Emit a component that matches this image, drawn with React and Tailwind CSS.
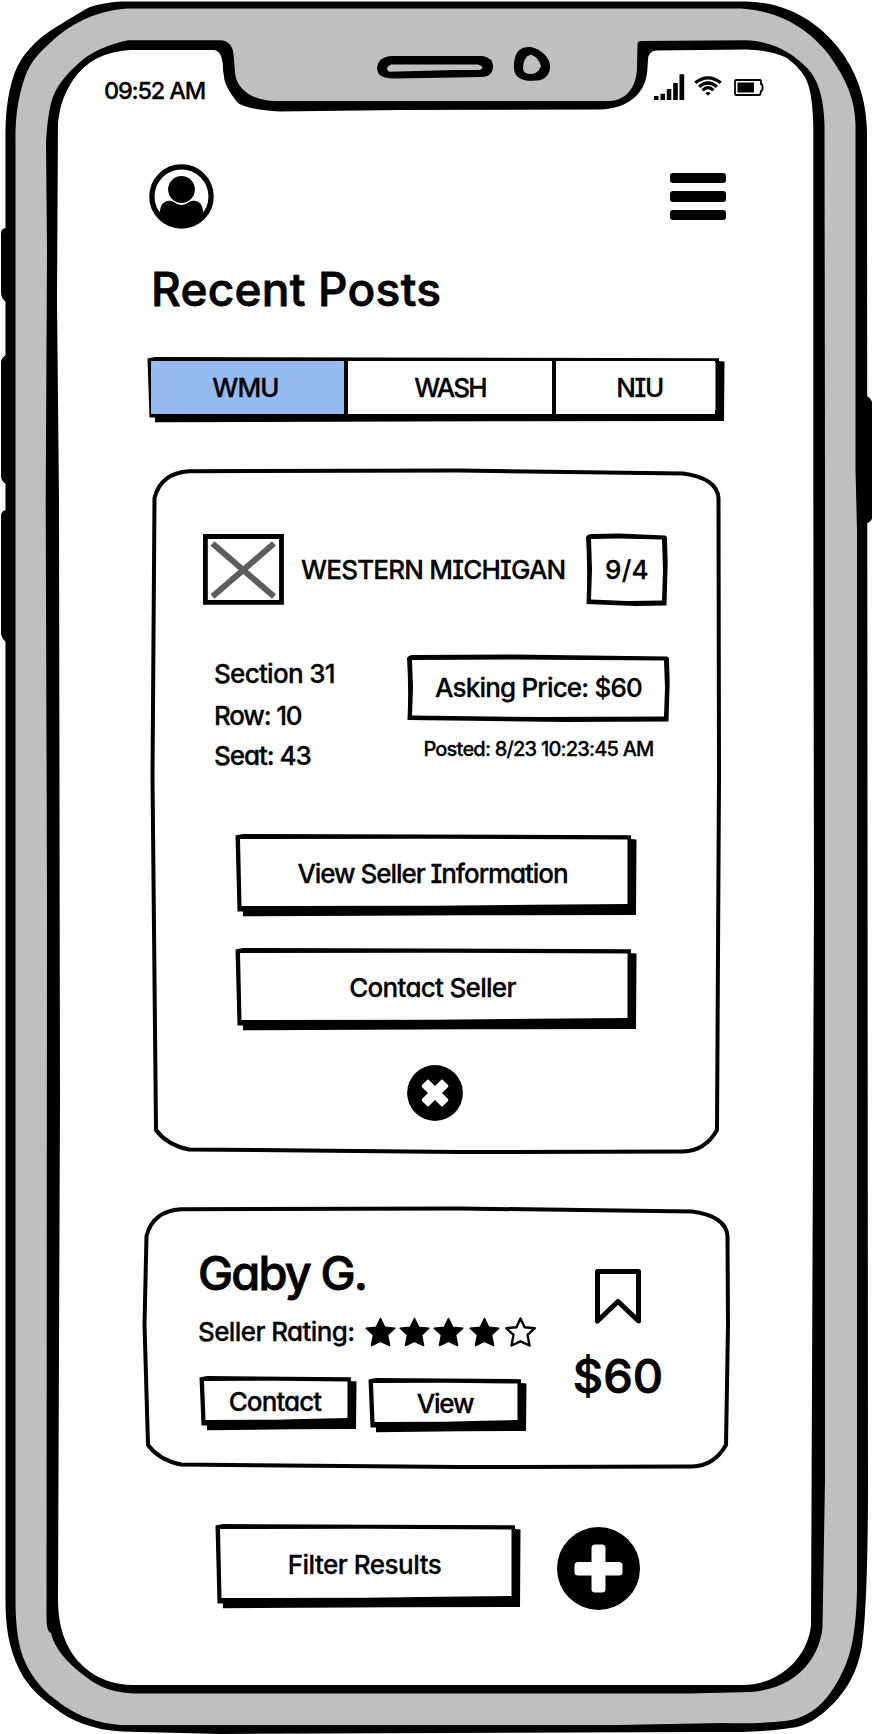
import React from "react";

function PhoneFrame() {
  return (
    <svg className="absolute inset-0" width="872" height="1734" viewBox="0 0 872 1734" aria-hidden="true">
      {/* side buttons */}
      <path d="M1 234Q1 228 6 228V302Q1 298 1 293ZM1 362Q2 357 6 355V484Q2 482 1 477ZM1 516Q1 511 6 510V642Q1 638 1 633Z" />
      <path d="M855 396H867Q871 398 873 404V515Q872 522 867 523H855Z" />
      {/* outer shell */}
      <path d="M122 1.500H745C795 2 828 31 845 57C860 80 867 105 867 135L868 1480C868 1560 866 1620 862 1646C857 1674 846 1690 834 1703C820 1717 806 1727 790 1728C760 1733 720 1732 695 1732L220 1734L122 1731.500C92 1730 70 1720 56 1709C38 1696 28 1686 20 1671C8 1647 5.500 1625 5.500 1600V140C5 110 9 88 15 72C21 56 36 40 50 31C66 21 80 12 90 7Q106 2 122 1.500Z" />
      <path
        fill="#bfbfbf"
        d="M127 8.500H740C785 11 813 34 829 55C847 80 855 100 855.500 125V470L857 530V1590C856 1640 849 1660 840 1677C828 1700 812 1718 785 1721Q760 1724 723 1723L617 1725H122C90 1723 70 1711 56 1700C38 1687 28 1670 23 1657Q15.500 1637 15.500 1600V143C15 118 18 97 25 77C31 61 39 53 50 43Q64 29 83 20Q104 10 127 8.500Z"
      />
      {/* screen outline with the notch */}
      <path d="M128 40.300H220Q232 41 233.500 54L235 72C236 90 254 101 275 101H609C624 101 637 89 637 67L637.500 44Q638 41 641 41L745 40.300C775 41 794 55 806 67C820 80 824 103 824.500 125L825 480V1480L822.500 1627C820 1655 800 1688 751 1692L690 1693.500H133C105 1692 93 1682 86 1677Q56 1655 51 1633Q46.500 1632 46.500 1618L47 900L45.700 500L47 250L46 143Q47 120 51 103C55 88 65 75 80 62Q97 47 128 40.300Z" />
      <path
        fill="#fff"
        d="M130 50H214Q223 51 223 70L224.500 80Q226 88 237 102Q243 109 280 111.500L400 110L599 109.500C630 109 646 92 647.300 70L648 60Q648 50.500 657 50.500L746 49.500Q770 50 787 58Q804 71 808 84Q813 99 813.300 130V480L814 900L811 1625C808 1657 780 1685 742 1685H133C98 1684 84 1667 77 1660Q58 1637 58 1600L60 1100L59 500L57 300L58 123C60 103 65 93 73 80Q92 52 130 50Z"
      />
      {/* speaker and camera */}
      <path d="M391 56H483Q493 58 493 66Q493 77 481 77L455 77.500L395 78.500Q377 79 377 68Q378 57 391 56Z" />
      <path fill="#bfbfbf" d="M391 64.500H478Q486 67 480 70L455 70L389 71.700Q384 68 391 64.500Z" />
      <path d="M529 47C538 47 551 57 550 67C550 74 545 81 536 80.500C526 82 514 79 514 68C514 58 516 47 529 47Z" />
      <path fill="#bfbfbf" d="M531 54.500Q539 58 541 66Q538 74 531 74Q523 74 523 68Q523 57 531 54.500Z" />
    </svg>
  );
}

/* Solid-shadow box with slightly uneven edges; sized by its parent. */
function ShadowSketch({ w, h, s = 5 }) {
  return (
    <svg className="absolute inset-0 overflow-visible" width={w} height={h} viewBox={`0 0 ${w} ${h}`} aria-hidden="true">
      <path d={`M-0.500 1.500L7 0L${w} 1.200V${s}L${w + 5.5} ${s + 0.5}L${w + 5} ${h + 4}L${w * 0.6} ${h + 4.3}L7 ${h + 5.2}V${h + 0.5}H1.500Z`} />
      <path fill="#fff" d={`M4 5L${w * 0.5} 4.800L${w - 3.5} 5.500V${h - 7}L${w * 0.75} ${h - 6.3}L${w * 0.5} ${h - 5.3}L5.500 ${h - 5}Z`} />
    </svg>
  );
}

function SketchButton({ w, h, className, children }) {
  return (
    <button className={`relative flex items-center justify-center ${className}`}>
      <ShadowSketch w={w} h={h} />
      {children}
    </button>
  );
}

/* Hand-drawn frame without a shadow. */
function SketchFrame({ w, h }) {
  return (
    <svg className="absolute inset-0 overflow-visible" width={w} height={h} viewBox={`0 0 ${w} ${h}`} aria-hidden="true">
      <path d={`M-1 3Q0.500 0 5 0L${w * 0.4} -0.500L${w - 2} 1.500Q${w + 0.5} 2 ${w} 6L${w + 0.7} ${h * 0.4}L${w - 0.5} ${h + 0.5}L${w * 0.6} ${h + 1}L-0.500 ${h - 1}Q1 ${h * 0.5} -1 3Z`} />
      <path fill="#fff" d={`M4 5L${w * 0.4} 4.500L${w - 5} 5.500L${w - 4} ${h * 0.5}L${w - 5} ${h - 4.5}L${w * 0.5} ${h - 4}L4 ${h - 5.5}L5 ${h * 0.5}Z`} />
    </svg>
  );
}

function CardOutline({ w, h }) {
  return (
    <svg className="absolute inset-0 overflow-visible" width={w} height={h} viewBox={`0 0 ${w} ${h}`} aria-hidden="true">
      <path
        fill="#fff"
        stroke="#000"
        strokeWidth="4"
        strokeLinejoin="round"
        d={`M37 1.300L${w * 0.54} 0.500L${w - 37} 3.500Q${w - 3} 8 ${w - 1.5} 28L${w - 1} ${h * 0.45}L${w - 3} ${h - 22}Q${w - 15} ${h - 1} ${w - 37} ${h - 0.5}L${w * 0.54} ${h}L37 ${h - 2.5}Q15 ${h - 7} 4 ${h - 22}L0.500 ${h * 0.45}L2.500 28Q9 3 37 1.300Z`}
      />
    </svg>
  );
}

function Signal() {
  return (
    <svg width="31" height="26" viewBox="0 0 31 26" aria-hidden="true">
      <path d="M0 22H4.500V26H0ZM6.500 19.800H11V26H6.500ZM12.800 15H17.300V26H12.800ZM19.200 9H23.800V26H19.200ZM25.500 0.300H30.200V26H25.500Z" />
    </svg>
  );
}

function Wifi() {
  return (
    <svg width="28" height="20" viewBox="0 0 28 20" fill="none" stroke="#000" strokeWidth="3.200" aria-hidden="true">
      <path d="M1.200 6.800Q14 -3.200 26.800 6.800M5 10.800Q14 3.200 23 10.800M8.500 14.300Q14 9 19.500 14.300" />
      <path d="M11.300 17.100Q14 14.800 16.700 17.100L14 19.800Z" fill="#000" stroke="none" />
    </svg>
  );
}

function Battery() {
  return (
    <svg width="30" height="17" viewBox="0 0 30 17" aria-hidden="true">
      <path d="M2.300 1H26Q27 1 27 2.500V5Q28.800 5.300 28.500 8.500Q28.800 11.500 27 12L26.300 15.300Q26 16 25 16H2.300Q1 16 1 14.700V2.300Q1 1 2.300 1Z" fill="none" stroke="#000" strokeWidth="1.800" />
      <path d="M3.500 3.500H20V13.500H3.500Z" />
    </svg>
  );
}

function Avatar() {
  return (
    <svg width="65" height="65" viewBox="0 0 65 65" aria-hidden="true">
      <circle cx="32.500" cy="32.500" r="29.600" fill="#fff" stroke="#000" strokeWidth="5.300" />
      <circle cx="32.500" cy="25.500" r="13.400" />
      <path d="M10.500 48.500Q12 36 21 36.800Q24 36.800 25 38.300Q32.500 43.500 40 38.300Q41 36.800 44 36.800Q53 36 54.500 48.500Q46 61 32.500 61T10.500 48.500Z" />
    </svg>
  );
}

function Star({ filled, className = "" }) {
  return (
    <svg width="31" height="30" viewBox="0 0 31 30" className={className} aria-hidden="true">
      <path
        d="M15.500 1.500L19.600 10.200L29.800 11.200L22.500 17.900L24.500 28.500L15.500 24.300L6.500 28.500L8.500 17.900L1.200 11.200L11.400 10.200Z"
        fill={filled ? "#000" : "#fff"}
        stroke="#000"
        strokeWidth={filled ? 1.6 : 2.4}
        strokeLinejoin="round"
      />
    </svg>
  );
}

function StatusBar() {
  return (
    <div className="flex h-[26px] items-end pl-[104px] pr-[108px]">
      <span className="flex h-[19px] flex-1 items-center text-[23.5px] tracking-[-1.2px]">09:52 AM</span>
      <Signal />
      <div className="ml-[9px] flex h-[26px] items-start pt-[2px]">
        <Wifi />
      </div>
      <div className="ml-[12px] flex h-[26px] items-start pt-[5px]">
        <Battery />
      </div>
    </div>
  );
}

function Tabs() {
  return (
    <div className="relative ml-[148px] mt-[48px] flex h-[60px] w-[571px]">
      <ShadowSketch w={571} h={60} s={4} />
      <div className="relative ml-[3px] mt-[4px] flex h-[53px] w-[564px]">
        <button className="flex w-[197px] items-center justify-center border-r-4 border-black bg-[#95baf1] pt-px pr-1 tracking-[-0.9px]">WMU</button>
        <button className="flex w-[208px] items-center justify-center border-r-4 border-black bg-white pt-px tracking-[-1.8px]">WASH</button>
        <button className="flex flex-1 items-center justify-center bg-white pl-[8px] pt-px tracking-[-1.4px]">NIU</button>
      </div>
    </div>
  );
}

function ListingCard() {
  return (
    <section className="relative ml-[152px] mt-[53px] h-[682px] w-[568px]">
      <CardOutline w={568} h={682} />
      <div className="relative flex flex-col">
        <div className="mt-[64px] flex h-[71px] items-center pl-[51px]">
          <svg width="81" height="71" viewBox="0 0 81 71" aria-hidden="true">
            <path d="M2.400 2.500H78.500V68.300H2.400Z" fill="#fff" stroke="#000" strokeWidth="4.800" />
            <path d="M9.500 9.500L71 62.500M71 9.500L9.500 62.500" stroke="#5d5d5f" strokeWidth="6" />
          </svg>
          <h2 className="ml-[17px] w-[286px] whitespace-nowrap tracking-[-0.8px]">WESTERN MICHIGAN</h2>
          <div className="relative flex h-[71px] w-[80px] items-center justify-center tracking-[0.3px]">
            <SketchFrame w={80} h={71} />
            <span className="relative pt-px">9/4</span>
          </div>
        </div>
        <div className="mt-[48px] flex h-[123px] pl-[62px]">
          <div className="flex w-[194px] flex-col leading-[41px]">
            <span className="tracking-[-0.7px]">Section 31</span>
            <span className="mt-px tracking-[-1.2px]">Row: 10</span>
            <span className="-mt-px tracking-[-1.05px]">Seat: 43</span>
          </div>
          <div className="flex flex-col items-center pt-[2px]">
            <div className="relative flex h-[66px] w-[261px] items-center justify-center tracking-[-0.8px]">
              <SketchFrame w={261} h={66} />
              <span className="relative">Asking Price: $60</span>
            </div>
            <p className="mt-[16px] text-[20px] leading-[24px] tracking-[-0.8px]">Posted: 8/23 10:23:45 AM</p>
          </div>
        </div>
        <div className="mt-[58px] flex flex-col gap-[37px] pl-[84px]">
          <SketchButton w={395} h={77} className="h-[77px] w-[395px]">
            <span className="relative pr-[2px] pt-[3px] tracking-[-1.05px]">View Seller Information</span>
          </SketchButton>
          <SketchButton w={395} h={77} className="h-[77px] w-[395px]">
            <span className="relative pr-[2px] pt-[3px] tracking-[-0.7px]">Contact Seller</span>
          </SketchButton>
        </div>
        <button className="ml-[255px] mt-[40px] h-[56px] w-[56px]">
          <svg width="56" height="56" viewBox="0 0 56 56" aria-hidden="true">
            <circle cx="28" cy="28" r="27.900" />
            <path
              d="M25 14.500H31Q32.500 14.500 32.500 16V23.500H40Q41.500 23.500 41.500 25V31Q41.500 32.500 40 32.500H32.500V40Q32.500 41.500 31 41.500H25Q23.500 41.500 23.500 40V32.500H16Q14.500 32.500 14.500 31V25Q14.500 23.500 16 23.500H23.500V16Q23.500 14.500 25 14.500Z"
              fill="#fff"
              transform="rotate(45 28 28) translate(-2.800 -2.800) scale(1.100)"
            />
          </svg>
        </button>
      </div>
    </section>
  );
}

function SellerCard() {
  return (
    <section className="relative ml-[144px] mt-[56px] h-[259px] w-[585px]">
      <CardOutline w={585} h={259} />
      <div className="relative flex">
        <div className="flex w-[403px] flex-col pl-[54px]">
          <h2 className="mt-[39px] whitespace-nowrap text-[47px] leading-[52px] tracking-[-1.9px] [-webkit-text-stroke:0.8px_#000]">Gaby G.</h2>
          <div className="mt-[15px] flex h-[36px] items-center">
            <span className="w-[167px] whitespace-nowrap tracking-[-0.6px]">Seller Rating:</span>
            <Star filled />
            <Star filled className="ml-[3px]" />
            <Star filled className="ml-[3px]" />
            <Star filled className="ml-[5px]" />
            <Star className="ml-[5px]" />
          </div>
          <div className="mt-[26px] flex items-start gap-[18px] pl-[2px]">
            <SketchButton w={151} h={49} className="h-[49px] w-[151px]">
              <span className="relative pt-[2px] pr-px tracking-[-0.9px]">Contact</span>
            </SketchButton>
            <SketchButton w={152} h={49} className="mt-[2px] h-[49px] w-[152px]">
              <span className="relative pt-[2px] tracking-[-1.2px]">View</span>
            </SketchButton>
          </div>
        </div>
        <div className="flex w-[142px] flex-col items-center">
          <svg className="mt-[60px]" width="48" height="57" viewBox="0 0 48 57" aria-hidden="true">
            <path d="M3.500 3.500H44.500V53L24 33.500L3.500 53Z" fill="#fff" stroke="#000" strokeWidth="5" strokeLinejoin="round" />
          </svg>
          <span className="mt-[25px] text-[47px] leading-[52px] [-webkit-text-stroke:0.8px_#000]">$60</span>
        </div>
      </div>
    </section>
  );
}

export default function App() {
  return (
    <main className="relative h-[1734px] w-[872px] overflow-hidden bg-white font-['Inter',sans-serif] text-[26px] font-medium leading-none text-black [-webkit-text-stroke:0.3px_#000] [font-feature-settings:'cv11','cv08']">
      <PhoneFrame />
      <div className="relative flex flex-col pt-[74px]">
        <StatusBar />
        <header className="mt-[64px] flex items-center justify-between pl-[149px] pr-[146px]">
          <Avatar />
          <div className="flex flex-col gap-[8px]">
            <span className="h-[10.5px] w-[56px] rounded-[3px] bg-black" />
            <span className="h-[10.5px] w-[56px] rounded-[3px] bg-black" />
            <span className="h-[10.5px] w-[56px] rounded-[3px] bg-black" />
          </div>
        </header>
        <h1 className="ml-[151px] mt-[40px] text-[46px] leading-[40px] tracking-[0.25px] [-webkit-text-stroke:0.8px_#000]">Recent Posts</h1>
        <Tabs />
        <ListingCard />
        <SellerCard />
        <div className="mt-[57px] flex items-start pl-[216px]">
          <SketchButton w={299} h={79} className="h-[79px] w-[299px]">
            <span className="relative pr-[2px] pt-[3px] tracking-[-0.5px]">Filter Results</span>
          </SketchButton>
          <button className="ml-[42px] mt-[3px] h-[83px] w-[83px]">
            <svg width="83" height="83" viewBox="0 0 83 83" aria-hidden="true">
              <circle cx="41.500" cy="41.500" r="41.500" />
              <path d="M38 17.500H45Q48.500 17.500 48.500 21V35H62Q65.500 35 65.500 38.500V45Q65.500 48.500 62 48.500H48.500V62Q48.500 65.500 45 65.500H38Q34.500 65.500 34.500 62V48.500H21Q17.500 48.500 17.500 45V38.500Q17.500 35 21 35H34.500V21Q34.500 17.500 38 17.500Z" fill="#fff" />
            </svg>
          </button>
        </div>
      </div>
    </main>
  );
}
